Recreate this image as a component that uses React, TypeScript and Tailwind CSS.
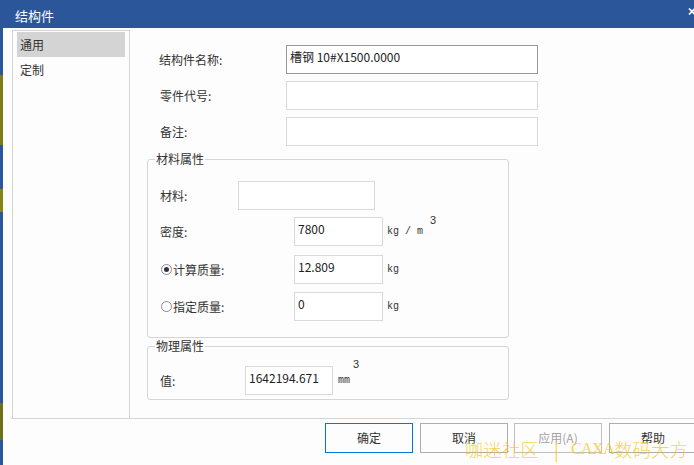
import React from 'react'

const font = { fontFamily: '"Noto Sans CJK SC", "Noto Sans", sans-serif' }

function Field({ value = '', className = '' }: { value?: string; className?: string }) {
  return (
    <input
      readOnly
      defaultValue={value}
      className={`h-[29px] border bg-white pl-[3px] pt-[2px] pb-[9px] text-[12px] leading-[16px] text-[#222] outline-none ${className}`}
      style={font}
    />
  )
}

function Radio({ checked }: { checked?: boolean }) {
  return (
    <span className="ml-[1px] mr-[1px] flex h-[11px] w-[11px] items-center justify-center rounded-full border border-[#8c8c8c] bg-white">
      {checked && <span className="h-[5px] w-[5px] rounded-full bg-[#333]" />}
    </span>
  )
}

const mono = { fontFamily: '"Liberation Mono", monospace' }
const sans = { fontFamily: '"Liberation Sans", sans-serif' }

function Group({ title, children, className = '' }: { title: string; children: React.ReactNode; className?: string }) {
  return (
    <fieldset className={`w-[362px] rounded-[3px] border border-[#d5d5d5] p-0 ${className}`}>
      <legend className="ml-[7px] px-[1px] text-[12px] leading-[18px] text-[#333]">{title}</legend>
      {children}
    </fieldset>
  )
}

export default function App() {
  return (
    <div className="relative flex h-[465px] w-[694px] flex-col overflow-hidden bg-[#2b579a]" style={font}>
      {/* title bar */}
      <div className="flex h-[28px] shrink-0 items-center pl-[15px] pt-[3px] text-[13px] text-white">
        <span>结构件</span>
        <svg className="ml-auto mr-[-3px] mb-[8px]" width="9" height="7" viewBox="0 0 9 7">
          <path d="M1 0.5 L7 6.5 M7 0.5 L1 6.5" stroke="white" strokeWidth="1.6" />
        </svg>
      </div>

      <div className="flex min-h-0 flex-1">
        {/* desktop showing at the left edge */}
        <div className="flex w-[3px] shrink-0 flex-col">
          <div className="h-[47px]" />
          <div className="h-[70px] bg-[#7d7d18]" />
          <div className="h-[44px]" />
          <div className="h-[23px] bg-[#868614]" />
          <div className="h-[191px]" />
          <div className="h-[37px] bg-[#6f6f1c]" />
        </div>

        <div className="flex flex-1 flex-col bg-[#fdfdfd]">
          <div className="flex min-h-0 flex-1 pt-[2px]">
            {/* left nav list */}
            <div className="ml-[9px] w-[118px] border-l border-r border-t border-[#d3d3d3] pl-[4px] pr-[4px] pt-[1px] text-[12px] text-[#333]">
              <div className="flex h-[25px] items-center bg-[#d4d4d4] pl-[3px]">通用</div>
              <div className="flex h-[25px] items-center pl-[3px]">定制</div>
            </div>

            {/* content */}
            <div className="flex-1 pl-[17px] text-[12px] text-[#333]">
              <div className="flex flex-col gap-[7px] pl-[12px] pt-[15px]">
                <div className="flex items-center">
                  <span className="w-[127px]">结构件名称:</span>
                  <Field value="槽钢 10#X1500.0000" className="w-[252px] border-[#999]" />
                </div>
                <div className="flex items-center">
                  <span className="w-[127px] pl-[1px]">零件代号:</span>
                  <Field className="w-[252px] border-[#d9d9d9]" />
                </div>
                <div className="flex items-center">
                  <span className="w-[127px] pl-[1px]">备注:</span>
                  <Field className="w-[252px] border-[#d9d9d9]" />
                </div>
              </div>

              <Group title="材料属性" className="mt-[4px]">
                <div className="flex flex-col pb-[16px] pl-[12px] pt-[13px]">
                  <div className="flex items-center">
                    <span className="w-[78px]">材料:</span>
                    <Field className="w-[137px] border-[#d9d9d9]" />
                  </div>
                  <div className="mt-[7px] flex items-center">
                    <span className="w-[134px]">密度:</span>
                    <Field value="7800" className="w-[89px] border-[#d9d9d9]" />
                    <div className="ml-[4px] flex h-[29px]">
                      <span className="self-center text-[10px] leading-[12px] text-[#333]" style={mono}>
                        kg / m
                      </span>
                      <span className="ml-[7px] mt-[-3px] text-[11px] leading-[12px] text-[#333]" style={sans}>
                        3
                      </span>
                    </div>
                  </div>
                  <div className="mt-[9px] flex items-center">
                    <span className="flex w-[134px] items-center">
                      <Radio checked />
                      计算质量:
                    </span>
                    <Field value="12.809" className="w-[89px] border-[#d9d9d9]" />
                    <span className="ml-[4px] text-[10px] leading-[12px] text-[#333]" style={mono}>
                      kg
                    </span>
                  </div>
                  <div className="mt-[8px] flex items-center">
                    <span className="flex w-[134px] items-center">
                      <Radio />
                      指定质量:
                    </span>
                    <Field value="0" className="w-[89px] border-[#d9d9d9]" />
                    <span className="ml-[4px] text-[10px] leading-[12px] text-[#333]" style={mono}>
                      kg
                    </span>
                  </div>
                </div>
              </Group>

              <Group title="物理属性" className="mt-[-1px]">
                <div className="flex items-center pb-[4px] pl-[12px] pt-[11px]">
                  <span className="w-[85px]">值:</span>
                  <Field value="1642194.671" className="w-[88px] border-[#d9d9d9]" />
                  <div className="ml-[5px] flex h-[29px]">
                    <span className="self-center text-[10px] leading-[12px] text-[#333]" style={mono}>
                      mm
                    </span>
                    <span className="ml-[3px] mt-[-8px] text-[11px] leading-[12px] text-[#333]" style={sans}>
                      3
                    </span>
                  </div>
                </div>
              </Group>
            </div>
          </div>

          <div className="ml-[8px] h-px shrink-0 bg-[#d5d5d5]" />

          {/* buttons */}
          <div className="flex h-[46px] shrink-0 items-start pl-[322px] pt-[4px] text-[12px]">
            <button className="h-[30px] w-[88px] shrink-0 border border-[#0078d7] bg-[#fdfdfd] text-[#333]">确定</button>
            <button className="ml-[7px] h-[30px] w-[88px] shrink-0 border border-[#adadad] bg-[#fdfdfd] text-[#333]">取消</button>
            <button className="ml-[6px] h-[30px] w-[88px] shrink-0 border border-[#bfbfbf] bg-[#fdfdfd] text-[#a3a3a3]">应用(A)</button>
            <button className="ml-[7px] h-[30px] w-[88px] shrink-0 border border-[#adadad] bg-[#fdfdfd] text-[#333]">帮助</button>
          </div>
        </div>
      </div>

      {/* watermark over the buttons */}
      <div className="pointer-events-none absolute left-[465px] top-[437px] flex items-center whitespace-nowrap text-[18px] font-light leading-[24px] tracking-[0.5px] text-[#f4c400] opacity-70">
        <span>咖迷社区</span>
        <span className="ml-[15px] mr-[12px] font-normal tracking-normal">|</span>
        <span className="text-[16px] tracking-[-0.5px]" style={{ fontFamily: '"Liberation Serif", serif' }}>CAXA</span>
        <span>数码大方</span>
      </div>
    </div>
  )
}
